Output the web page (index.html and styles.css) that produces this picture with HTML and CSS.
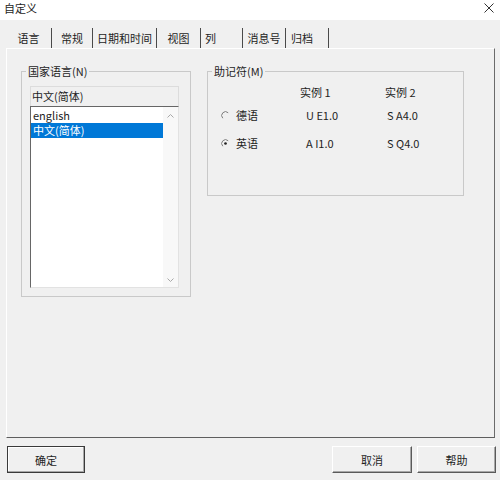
FILE: index.html
```html
<!DOCTYPE html>
<html>
<head>
    <meta charset="UTF-8">
    <title>自定义</title>
    <link rel="stylesheet" href="styles.css">
</head>
<body>
    <div class="window">
        <div class="titlebar">
            <span class="title">自定义</span>
            <svg class="close" width="10" height="10" viewBox="0 0 10 10">
                <path d="M0.5 0.5 L9.5 9.5 M9.5 0.5 L0.5 9.5" stroke="#333" stroke-width="1" fill="none"/>
            </svg>
        </div>

        <div class="tabs">
            <div class="tab active">语言</div>
            <div class="tab">常规</div>
            <div class="tab">日期和时间</div>
            <div class="tab">视图</div>
            <div class="tab">列</div>
            <div class="tab">消息号</div>
            <div class="tab">归档</div>
        </div>

        <div class="panel">
            <fieldset class="group group-lang">
                <legend>国家语言(N)</legend>
                <div class="group-body">
                    <div class="current">中文(简体)</div>
                    <div class="listbox">
                        <ul class="items">
                            <li>english</li>
                            <li class="selected">中文(简体)</li>
                        </ul>
                        <div class="scrollbar">
                            <svg width="7" height="4" viewBox="0 0 7 4"><path d="M0.5 3.5 L3.5 0.5 L6.5 3.5" stroke="#a8a8a8" fill="none"/></svg>
                            <svg width="7" height="4" viewBox="0 0 7 4"><path d="M0.5 0.5 L3.5 3.5 L6.5 0.5" stroke="#a8a8a8" fill="none"/></svg>
                        </div>
                    </div>
                </div>
            </fieldset>

            <fieldset class="group group-mnemonic">
                <legend>助记符(M)</legend>
                <div class="mn-body">
                    <div class="mn-row mn-head">
                        <div class="mn-label"></div>
                        <div class="mn-ex1">实例 1</div>
                        <div class="mn-ex2">实例 2</div>
                    </div>
                    <div class="mn-row mn-first">
                        <div class="mn-label">
                            <svg class="radio" width="9" height="9" viewBox="0 0 12 12">
                                <path d="M9.6 2.4 A5 5 0 0 0 2.4 9.6" stroke="#7a7a7a" stroke-width="1.3" fill="none"/>
                            </svg>
                            <span>德语</span>
                        </div>
                        <div class="mn-ex1 mn-val1">U E1.0</div>
                        <div class="mn-ex2 mn-val2">S A4.0</div>
                    </div>
                    <div class="mn-row mn-second">
                        <div class="mn-label">
                            <svg class="radio" width="9" height="9" viewBox="0 0 12 12">
                                <path d="M9.6 2.4 A5 5 0 0 0 2.4 9.6" stroke="#7a7a7a" stroke-width="1.3" fill="none"/>
                                <circle cx="6" cy="6" r="1.8" fill="#222"/>
                            </svg>
                            <span>英语</span>
                        </div>
                        <div class="mn-ex1 mn-val1">A I1.0</div>
                        <div class="mn-ex2 mn-val2">S Q4.0</div>
                    </div>
                </div>
            </fieldset>
        </div>

        <div class="buttons">
            <button class="btn btn-default">确定</button>
            <div class="buttons-right">
                <button class="btn btn-cancel">取消</button>
                <button class="btn">帮助</button>
            </div>
        </div>
    </div>
</body>
</html>
```

FILE: styles.css
```css
* {
    margin: 0;
    padding: 0;
    box-sizing: border-box;
}

body {
    font-family: "Noto Sans CJK SC", "Noto Sans", sans-serif;
    font-size: 11px;
    color: #1e1e1e;
    background: #f0f0f0;
    width: 500px;
    height: 480px;
    overflow: hidden;
}

.titlebar {
    height: 20px;
    background: #ffffff;
    display: flex;
    justify-content: space-between;
    padding: 0 6px 0 4px;
    line-height: 17px;
}

.close {
    margin-top: 3px;
}

.tabs {
    display: flex;
    margin-top: 8px;
    padding-left: 6px;
    height: 20px;
    line-height: 20px;
}

.tab {
    border-right: 1px solid #4a4a4a;
    text-align: center;
}

.tab:nth-child(1) { width: 46px; }
.tab:nth-child(2) { width: 41px; }
.tab:nth-child(3) { width: 64px; }
.tab:nth-child(4) { width: 44px; }
.tab:nth-child(5) { width: 42px; text-align: left; padding-left: 4px; }
.tab:nth-child(6) { width: 43px; }
.tab:nth-child(7) { width: 43px; text-align: left; padding-left: 5px; }

.panel {
    display: flex;
    align-items: flex-start;
    margin: 0 5px 0 6px;
    height: 390px;
    padding: 15px 0 0 14px;
    border-top: 1px solid #ffffff;
    border-left: 1px solid #ffffff;
    border-right: 1px solid #6b6b6b;
    border-bottom: 1px solid #5e5e5e;
}

.group {
    border: 1px solid #c9c9c9;
    padding: 0;
    margin: 0;
    min-width: 0;
}

.group legend {
    margin-left: 4px;
    padding: 0 2px;
    line-height: 14px;
}

.group-lang {
    width: 170px;
}

.group-mnemonic {
    width: 257px;
    margin-left: 16px;
}

.group-body {
    padding: 8px 11px 8px 8px;
}

.current {
    height: 20px;
    line-height: 19px;
    padding-left: 1px;
    border: 1px solid #dcdcdc;
    border-bottom: none;
}

.listbox {
    display: flex;
    height: 182px;
    background: #ffffff;
    border-top: 1px solid #666666;
    border-left: 1px solid #666666;
    border-right: 1px solid #e2e2e2;
    border-bottom: 1px solid #e2e2e2;
}

.items {
    list-style: none;
    width: 132px;
    padding-top: 1px;
}

.items li {
    height: 15px;
    line-height: 15px;
    padding-left: 2px;
}

.items li.selected {
    background: #0078d7;
    color: #ffffff;
}

.scrollbar {
    width: 15px;
    background: #f8f8f8;
    display: flex;
    flex-direction: column;
    justify-content: space-between;
    align-items: center;
    padding: 7px 0 5px;
}

.mn-body {
    padding: 6px 0 44px 13px;
}

.mn-row {
    display: flex;
    height: 16px;
    line-height: 16px;
}

.mn-first {
    margin-top: 7px;
}

.mn-second {
    margin-top: 12px;
}

.mn-label {
    width: 79px;
    display: flex;
    align-items: center;
}

.radio {
    margin-right: 6px;
}

.mn-ex1 {
    width: 85px;
}

.mn-val1 {
    padding-left: 6px;
}

.mn-val2 {
    padding-left: 2px;
}

.buttons {
    display: flex;
    justify-content: space-between;
    margin-top: 8px;
    padding: 0 4px 0 7px;
}

.buttons-right {
    display: flex;
    gap: 5px;
}

.btn {
    width: 79px;
    height: 27px;
    font-family: inherit;
    font-size: 11px;
    color: #1e1e1e;
    background: #f0f0f0;
    border: 1px solid;
    border-color: #ffffff #5a5a5a #5a5a5a #ffffff;
    box-shadow: inset -1px -1px 0 #a8a8a8;
}

.btn-default {
    width: 78px;
    border-color: #3a3a3a;
    box-shadow: inset -1px -1px 0 #a8a8a8, inset 1px 1px 0 #ffffff;
}

.btn-cancel {
    width: 80px;
}
```
